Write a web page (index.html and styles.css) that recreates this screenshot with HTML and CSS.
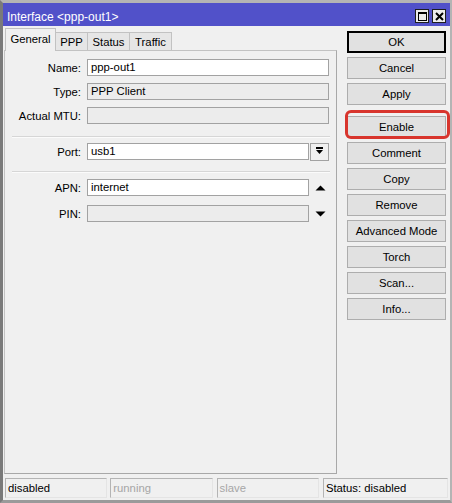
FILE: index.html
```html
<!DOCTYPE html>
<html>
<head>
<meta charset="utf-8">
<link rel="stylesheet" href="styles.css">
</head>
<body>
<div class="window">
  <div class="titlebar">
    <span class="title">Interface &lt;ppp-out1&gt;</span>
    <div class="tb-buttons">
      <span class="tb-btn"><svg width="11" height="11" viewBox="0 0 11 11"><rect x="1.5" y="1.5" width="8" height="8" fill="none" stroke="#000" stroke-width="1"/><rect x="1" y="1" width="9" height="2" fill="#000"/></svg></span>
      <span class="tb-btn"><svg width="11" height="11" viewBox="0 0 11 11"><path d="M2 2 L9 9 M9 2 L2 9" stroke="#000" stroke-width="2"/></svg></span>
    </div>
  </div>
  <div class="content">
    <div class="main">
      <div class="left">
        <div class="tabs">
          <span class="tab active">General</span>
          <span class="tab w-ppp">PPP</span>
          <span class="tab w-status">Status</span>
          <span class="tab w-traffic">Traffic</span>
        </div>
        <div class="panel">
          <div class="row r-name"><span class="label">Name:</span><span class="input wide">ppp-out1</span></div>
          <div class="row r-type"><span class="label">Type:</span><span class="input wide ro">PPP Client</span></div>
          <div class="row r-mtu"><span class="label">Actual MTU:</span><span class="input wide ro"></span></div>
          <div class="sep s1"></div>
          <div class="row r-port"><span class="label">Port:</span><span class="input narrow">usb1</span><span class="ddbtn"><svg width="9" height="9" viewBox="0 0 9 9"><rect x="1" y="0" width="7" height="2" fill="#000"/><path d="M1 3 H8 L4.5 7 Z" fill="#000"/></svg></span></div>
          <div class="sep s2"></div>
          <div class="row r-apn"><span class="label">APN:</span><span class="input narrow">internet</span><span class="arrow"><svg width="11" height="6" viewBox="0 0 11 6"><path d="M0.5 5.5 L5.5 0.5 L10.5 5.5 Z" fill="#000"/></svg></span></div>
          <div class="row r-pin"><span class="label">PIN:</span><span class="input narrow ro"></span><span class="arrow"><svg width="11" height="6" viewBox="0 0 11 6"><path d="M0.5 0.5 L5.5 5.5 L10.5 0.5 Z" fill="#000"/></svg></span></div>
        </div>
      </div>
      <div class="buttons">
        <span class="btn default">OK</span>
        <span class="btn">Cancel</span>
        <span class="btn">Apply</span>
        <span class="btn enable">Enable</span>
        <span class="btn">Comment</span>
        <span class="btn">Copy</span>
        <span class="btn">Remove</span>
        <span class="btn">Advanced Mode</span>
        <span class="btn">Torch</span>
        <span class="btn">Scan...</span>
        <span class="btn">Info...</span>
      </div>
    </div>
    <div class="statusbar">
      <span class="cell c1">disabled</span>
      <span class="cell c2 dim">running</span>
      <span class="cell c3 dim">slave</span>
      <span class="cell c4">Status: disabled</span>
    </div>
  </div>
</div>
</body>
</html>
```
FILE: styles.css
```css
* { box-sizing: border-box; }
html, body { margin: 0; padding: 0; }
body {
  width: 452px;
  height: 503px;
  overflow: hidden;
  font-family: "Liberation Sans", Arial, sans-serif;
  font-size: 11.3px;
  color: #000;
  background: #f0f0f0;
}
.window {
  width: 452px;
  height: 503px;
  border-style: solid;
  border-width: 3px 2px 3px 3px;
  border-color: #b4b4b4 #b4b4b4 #9a9a9a #7a7a7a;
  display: flex;
  flex-direction: column;
  background: #f0f0f0;
}
.titlebar {
  height: 23px;
  flex: none;
  background: #5151c9;
  color: #fff;
  display: flex;
  align-items: flex-start;
  padding: 0 4px 0 4px;
}
.title {
  font-size: 12px;
  line-height: 14px;
  margin-top: 7px;
}
.tb-buttons {
  margin-left: auto;
  display: flex;
  gap: 3px;
  margin-top: 6px;
}
.tb-btn {
  width: 14px;
  height: 14px;
  border: 1px solid #1e1e1e;
  background: #ececec;
  display: flex;
  align-items: center;
  justify-content: center;
}
.content {
  flex: 1;
  display: flex;
  flex-direction: column;
  padding: 0 2px 0 1px;
}
.main {
  display: flex;
}
.left {
  width: 333px;
  display: flex;
  flex-direction: column;
}
.tabs {
  height: 25px;
  display: flex;
  align-items: flex-end;
  padding-left: 1px;
  margin-bottom: -1px;
  position: relative;
  z-index: 1;
}
.tab {
  height: 18px;
  margin-bottom: 1px;
  border: 1px solid #c2c2c2;
  border-bottom: none;
  border-left: none;
  background: #e6e6e6;
  display: flex;
  align-items: center;
  justify-content: center;
  padding-top: 1px;
}
.tab.active {
  width: 51px;
  height: 23px;
  margin-bottom: 0;
  background: #f0f0f0;
  border-left: 1px solid #c2c2c2;
  padding-bottom: 3px;
}
.w-ppp { width: 32px; }
.w-status { width: 42px; }
.w-traffic { width: 42px; }
.panel {
  height: 424px;
  border: 1px solid #c2c2c2;
  border-right-color: #a8a8a8;
  border-bottom-color: #a8a8a8;
  padding-top: 8px;
  display: flex;
  flex-direction: column;
}
.row {
  display: flex;
  align-items: center;
  height: 17px;
}
.label {
  width: 76px;
  text-align: right;
  margin-right: 6px;
  white-space: nowrap;
}
.input {
  height: 17px;
  border: 1px solid #a2a2a2;
  background: #fff;
  padding-left: 3px;
  line-height: 15px;
  white-space: nowrap;
}
.input.ro { background: #ececec; }
.wide { width: 242px; }
.narrow { width: 222px; }
.ddbtn {
  width: 19px;
  height: 18px;
  margin-left: 1px;
  border: 1px solid #a2a2a2;
  background: #f0f0f0;
  display: flex;
  align-items: center;
  justify-content: center;
}
.arrow {
  width: 11px;
  margin-left: 6px;
  display: flex;
  align-items: center;
}
.r-type, .r-mtu { margin-top: 7px; }
.sep {
  height: 2px;
  border-top: 1px solid #d6d6d6;
  border-bottom: 1px solid #fbfbfb;
  margin-left: 7px;
  margin-right: 6px;
}
.s1 { margin-top: 12px; }
.r-port { margin-top: 5px; }
.s2 { margin-top: 11px; }
.r-apn { margin-top: 6px; }
.r-pin { margin-top: 9px; }
.buttons {
  margin-left: 10px;
  padding-top: 5px;
  width: 99px;
  display: flex;
  flex-direction: column;
  gap: 4px;
}
.btn {
  height: 22px;
  border: 1px solid #adadad;
  background: #e1e1e1;
  display: flex;
  align-items: center;
  justify-content: center;
  white-space: nowrap;
}
.btn.default {
  border: 1px solid #000;
  box-shadow: inset 0 0 0 1px #000;
}
.btn.enable {
  margin-top: 7px;
  position: relative;
}
.btn.enable::after {
  content: "";
  position: absolute;
  left: -3px;
  right: -5px;
  top: -7px;
  bottom: -2px;
  border: 3px solid #d8352d;
  border-radius: 6px;
}
.statusbar {
  margin-top: 4px;
  display: flex;
  padding-left: 1px;
}
.cell {
  height: 20px;
  border: 1px solid #b4b4b4;
  border-right-color: #e4e4e4;
  border-bottom-color: #e4e4e4;
  padding-left: 2px;
  line-height: 18px;
  white-space: nowrap;
}
.c1 { width: 103px; }
.c2 { width: 103px; margin-left: 3px; }
.c3 { width: 103px; margin-left: 4px; }
.c4 { width: 126px; margin-left: 4px; }
.dim { color: #a6a6a6; }
```
